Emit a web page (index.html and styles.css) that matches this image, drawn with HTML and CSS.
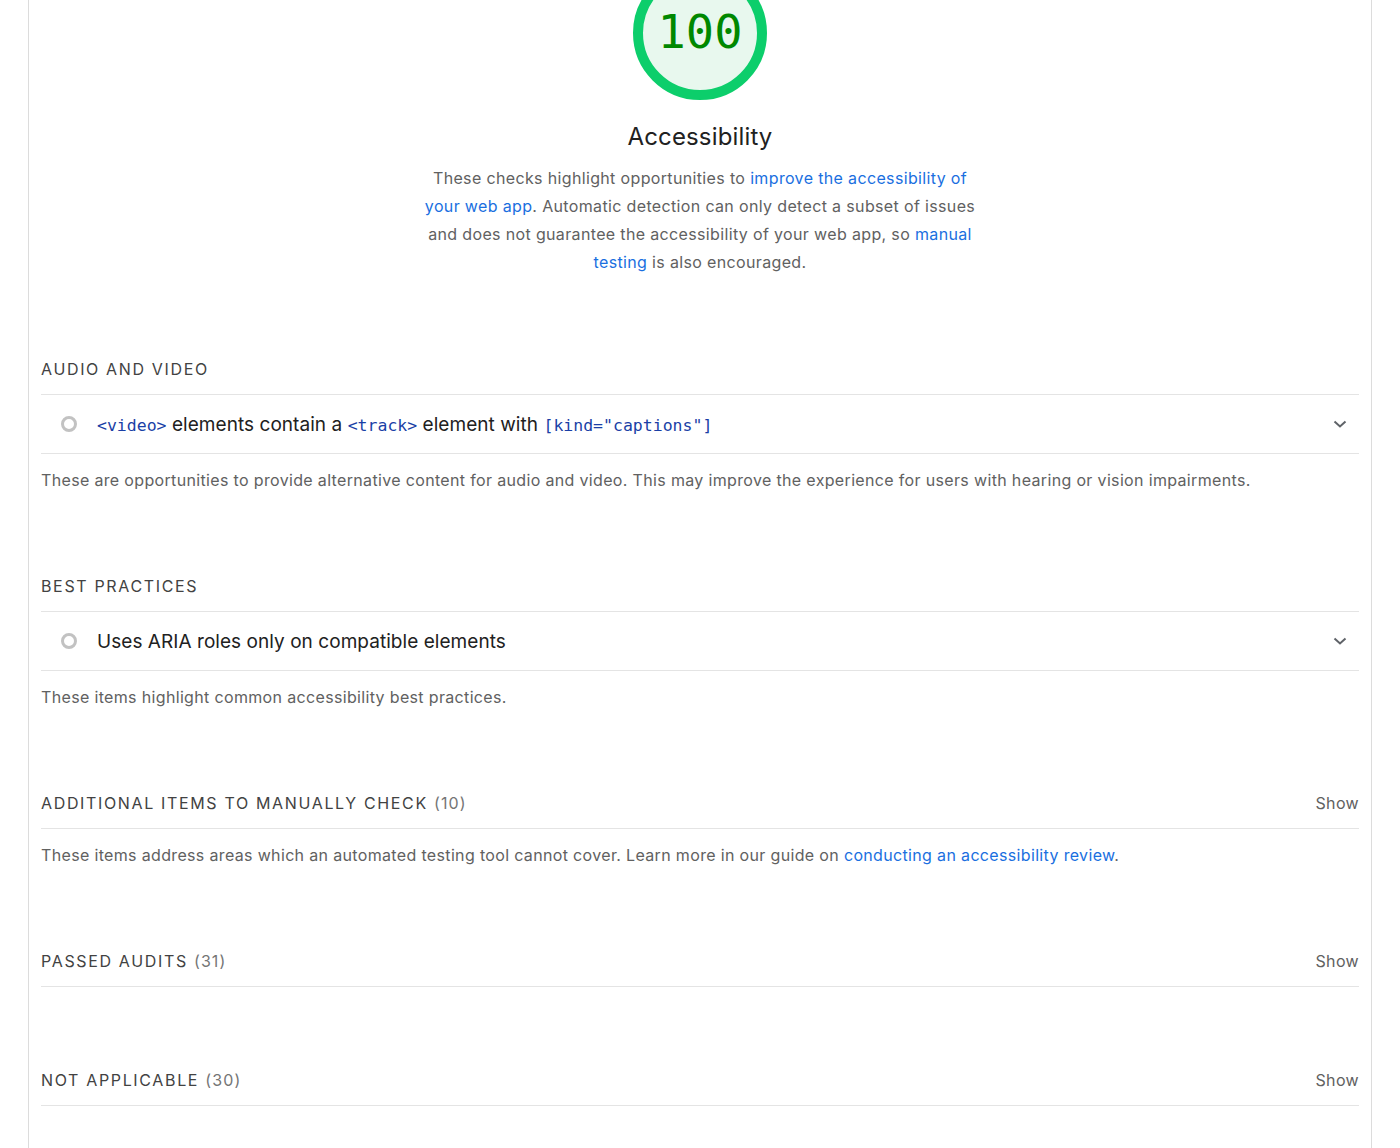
FILE: index.html
```html
<!DOCTYPE html>
<html lang="en">
<head>
<meta charset="utf-8">
<title>Accessibility</title>
<link rel="stylesheet" href="styles.css">
</head>
<body>
<div class="report">
  <header class="cat-header">
    <div class="gauge-wrap">
      <svg class="gauge" width="134" height="134" viewBox="0 0 134 134">
        <circle cx="67" cy="67" r="62" fill="#e8f8ee" stroke="#0cce6b" stroke-width="10"/>
      </svg>
      <div class="gauge-value">100</div>
    </div>
    <h1 class="cat-title">Accessibility</h1>
    <p class="cat-desc">These checks highlight opportunities to <a href="#">improve the accessibility of<br>your web app</a>. Automatic detection can only detect a subset of issues<br>and does not guarantee the accessibility of your web app, so <a href="#">manual<br>testing</a> is also encouraged.</p>
  </header>

  <section class="group">
    <div class="group-head"><span class="group-title">Audio and video</span></div>
    <div class="audit">
      <span class="audit-icon"></span>
      <span class="audit-title"><code>&lt;video&gt;</code> elements contain a <code>&lt;track&gt;</code> element with <code>[kind="captions"]</code></span>
      <svg class="chev" width="14" height="10" viewBox="0 0 14 10"><path d="M1.5 2.5 L7 7.5 L12.5 2.5" fill="none" stroke="#5f6368" stroke-width="2"/></svg>
    </div>
    <p class="group-desc">These are opportunities to provide alternative content for audio and video. This may improve the experience for users with hearing or vision impairments.</p>
  </section>

  <section class="group">
    <div class="group-head"><span class="group-title">Best practices</span></div>
    <div class="audit">
      <span class="audit-icon"></span>
      <span class="audit-title">Uses ARIA roles only on compatible elements</span>
      <svg class="chev" width="14" height="10" viewBox="0 0 14 10"><path d="M1.5 2.5 L7 7.5 L12.5 2.5" fill="none" stroke="#5f6368" stroke-width="2"/></svg>
    </div>
    <p class="group-desc">These items highlight common accessibility best practices.</p>
  </section>

  <section class="group">
    <div class="group-head"><span class="group-title">Additional items to manually check <span class="count">(10)</span></span><span class="show">Show</span></div>
    <p class="group-desc">These items address areas which an automated testing tool cannot cover. Learn more in our guide on <a href="#">conducting an accessibility review</a>.</p>
  </section>

  <section class="group group-empty">
    <div class="group-head"><span class="group-title">Passed audits <span class="count">(31)</span></span><span class="show">Show</span></div>
  </section>

  <section class="group group-empty">
    <div class="group-head"><span class="group-title">Not applicable <span class="count">(30)</span></span><span class="show">Show</span></div>
  </section>
</div>
</body>
</html>
```

FILE: styles.css
```css
html, body {
  margin: 0;
  padding: 0;
  background: #fff;
  height: 100%;
  overflow: hidden;
}
body {
  font-family: Inter, "Noto Sans", sans-serif;
  color: #212121;
}
.report {
  margin: 0 28px;
  border-left: 1px solid #dcdcdc;
  border-right: 1px solid #dcdcdc;
  padding: 0 12px;
  min-height: 1148px;
  box-sizing: border-box;
}
.cat-header {
  display: flex;
  flex-direction: column;
  align-items: center;
  padding-bottom: 81px;
}
.gauge-wrap {
  display: grid;
  margin-top: -34px;
  width: 134px;
  height: 134px;
}
.gauge,
.gauge-value {
  grid-area: 1 / 1;
}
.gauge {
  display: block;
}
.gauge-value {
  align-self: center;
  justify-self: center;
  font-family: "DejaVu Sans Mono", "Liberation Mono", monospace;
  font-size: 47px;
  line-height: 50px;
  color: #008800;
  margin-top: -3px;
}
.cat-title {
  margin: 21px 0 0;
  font-size: 24px;
  line-height: 32px;
  font-weight: 400;
  color: #212121;
  letter-spacing: 0.15px;
}
.cat-desc {
  margin: 11px 0 0;
  font-size: 16px;
  line-height: 28px;
  text-align: center;
  color: #616161;
  letter-spacing: 0.35px;
}
a {
  color: #1a6fdf;
  text-decoration: none;
}
.group {
  padding-bottom: 82px;
}
.group-empty {
  padding-bottom: 81px;
}
.group-head {
  display: flex;
  justify-content: space-between;
  align-items: center;
  padding-bottom: 13px;
  border-bottom: 1px solid #e4e4e4;
  line-height: 24px;
}
.group-title {
  font-size: 16px;
  text-transform: uppercase;
  letter-spacing: 1.65px;
  color: #424242;
}
.count {
  color: #757575;
  letter-spacing: 1.1px;
}
.show {
  font-size: 16px;
  color: #616161;
  letter-spacing: 0.35px;
}
.audit {
  display: flex;
  align-items: center;
  height: 58px;
  border-bottom: 1px solid #e4e4e4;
  padding-left: 20px;
}
.audit-icon {
  width: 10px;
  height: 10px;
  border: 3px solid #c2c2c2;
  border-radius: 50%;
  flex: none;
}
.audit-title {
  margin-left: 20px;
  flex: 1;
  font-size: 19px;
  color: #212121;
  letter-spacing: 0.05px;
}
.audit-title code {
  font-family: "DejaVu Sans Mono", "Liberation Mono", monospace;
  font-size: 16.5px;
  color: #1a3fa6;
  letter-spacing: 0;
}
.chev {
  flex: none;
  margin-right: 12px;
}
.group-desc {
  margin: 14px 0 0;
  font-size: 16px;
  line-height: 24px;
  color: #616161;
  letter-spacing: 0.34px;
}
```
